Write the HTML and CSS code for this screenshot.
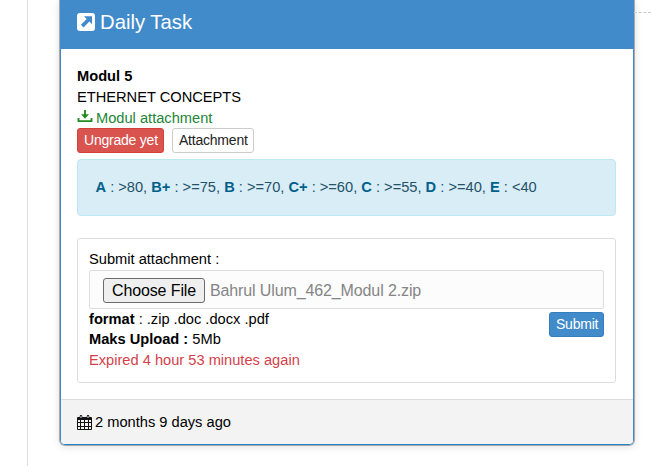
FILE: index.html
```html
<!DOCTYPE html>
<html lang="en">
<head>
<meta charset="utf-8">
<title>Daily Task</title>
<link rel="stylesheet" href="styles.css">
</head>
<body>
<main class="timeline">
  <div class="connector"></div>
  <article class="panel">
    <header class="panel-heading">
      <svg class="icon-task" viewBox="0 0 18 18"><path fill="#fff" d="M3 0h12a3 3 0 0 1 3 3v12a3 3 0 0 1-3 3H3a3 3 0 0 1-3-3V3a3 3 0 0 1 3-3z"/><path fill="#428bca" d="M7 3.2h8v8l-2.6-2.6-5.9 5.8-2.6-2.6 5.8-5.9z"/></svg>
      <h1>Daily Task</h1>
    </header>
    <div class="panel-body">
      <div class="line"><b>Modul 5</b></div>
      <div class="line">ETHERNET CONCEPTS</div>
      <a class="line download"><svg class="icon-download" viewBox="0 0 16 14"><path fill="none" stroke="currentColor" stroke-width="2" d="M1 8.5V12h14V8.5"/><path fill="currentColor" d="M7 0h2v4.5h3.2L8 9.5 3.8 4.5H7z"/></svg><span>Modul attachment</span></a>
      <div class="actions"><button class="btn danger">Ungrade yet</button><button class="btn outline">Attachment</button></div>
      <div class="alert"><b>A</b> : &gt;80, <b>B+</b> : &gt;=75, <b>B</b> : &gt;=70, <b>C+</b> : &gt;=60, <b>C</b> : &gt;=55, <b>D</b> : &gt;=40, <b>E</b> : &lt;40</div>
      <section class="well">
        <div class="line">Submit attachment :</div>
        <div class="file"><button class="choose">Choose File</button><span>Bahrul Ulum_462_Modul 2.zip</span></div>
        <div class="details">
          <div>
            <div class="line"><b>format</b> : .zip .doc .docx .pdf</div>
            <div class="line"><b>Maks Upload :</b> 5Mb</div>
            <div class="line expired">Expired 4 hour 53 minutes again</div>
          </div>
          <button class="btn primary">Submit</button>
        </div>
      </section>
    </div>
    <footer class="panel-footer">
      <svg class="icon-calendar" viewBox="0 0 15 16"><path fill="#111" fill-rule="evenodd" d="M1 2h13a1 1 0 0 1 1 1v11a1 1 0 0 1-1 1H1a1 1 0 0 1-1-1V3a1 1 0 0 1 1-1zM1 5v2h2V5zm3 0v2h3V5zm4 0v2h3V5zm4 0v2h2V5zM1 8v3h2V8zm3 0v3h3V8zm4 0v3h3V8zm4 0v3h2V8zM1 12v2h2v-2zm3 0v2h3v-2zm4 0v2h3v-2zm4 0v2h2v-2z"/><path stroke="#111" stroke-width="2.6" stroke-linecap="round" d="M4 1.4v1.2M11 1.4v1.2"/><path stroke="#ddd" stroke-width="1" d="M4 1v2M11 1v2"/></svg>
      <span>2 months 9 days ago</span>
    </footer>
  </article>
  <div class="divider"></div>
</main>
</body>
</html>
```
FILE: styles.css
```css
* { box-sizing: border-box; }
body { margin: 0; height: 466px; overflow: hidden; background: #fff; color: #000; font: 14.65px/21px "Liberation Sans", Arial, sans-serif; }
.timeline { display: flex; align-items: flex-start; height: 466px; padding-left: 27px; }
.connector { width: 1px; height: 466px; margin-right: 32px; background: #ddd; }
.panel { width: 574px; height: 445px; border: solid #428bca; border-width: 0 1px 1px; border-color: #428bca #428bca #2383c6; border-radius: 0 0 5px 5px; box-shadow: 0 0 0 1px #aaa, 0 1px 9px rgba(0,0,0,.16); overflow: hidden; display: flex; flex-direction: column; }
.divider { flex: 1; margin-top: 12px; border-top: 1px dashed #ccc; }
.panel-heading { display: flex; height: 49px; padding: 12px 16px 0; gap: 5px; background: #428bca; color: #fff; }
h1 { margin: -2px 0 0; font-size: 20.3px; line-height: 24px; font-weight: 400; }
.icon-task { width: 18px; height: 18px; margin-top: 1px; }
.panel-body { height: 350px; padding: 17px 17px 0 16px; }
.line { height: 21px; white-space: nowrap; }
.download { display: flex; gap: 3px; height: 20px; color: #228636; }
.icon-download { width: 16px; height: 13px; margin-top: 2px; color: #228b22; }
.actions { display: flex; gap: 8px; height: 25px; }
.btn { height: 25px; padding: 0 6px 1px; border: 1px solid #ccc; border-radius: 3px; background: #fff; color: #222; font: 14px/20px "Liberation Sans", Arial, sans-serif; letter-spacing: -.22px; white-space: nowrap; }
.outline { width: 82px; }
.danger { width: 87px; background: #d9534f; border-color: #d43f3a; color: #fff; }
.primary { width: 55px; margin-top: 3px; padding-bottom: 2px; background: #428bca; border-color: #357ebd; color: #fff; }
.alert { height: 57px; margin-top: 6px; padding: 17px 17.5px; border: 1px solid #bce8f1; border-radius: 4px; background: #d9edf7; color: #245269; white-space: nowrap; }
.alert b { color: #00608a; }
.well { height: 145px; margin-top: 22px; padding: 10px 11px; border: 1px solid #ddd; border-radius: 3px; }
.file { display: flex; align-items: center; gap: 5px; height: 39px; padding: 1px 13px 0; border: 1px solid #ddd; border-radius: 2px; background: #fcfcfc; color: #858585; font-size: 16px; letter-spacing: -.12px; }
.choose { width: 102px; height: 25px; padding: 1px 0 0; border: 1px solid #6b6b6b; border-radius: 3px; background: #efefef; color: #000; font: 16px/20px "Liberation Sans", Arial, sans-serif; letter-spacing: -.12px; }
.details { display: flex; justify-content: space-between; align-items: flex-start; }
.details .line { height: 20.4px; }
.expired { color: #d43f4a; }
.panel-footer { flex: 1; display: flex; align-items: center; gap: 3px; padding: 1px 16px 0; border-top: 1px solid #ddd; background: #f3f3f3; }
.icon-calendar { width: 15px; height: 16px; }
```
